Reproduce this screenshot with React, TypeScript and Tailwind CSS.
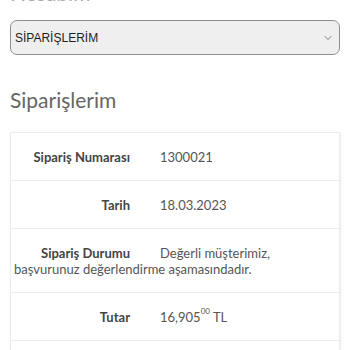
import { ChevronDown } from 'lucide-react';

const rows = [
  { label: 'Sipariş Numarası', value: <>1300021</> },
  { label: 'Tarih', value: <>18.03.2023</> },
  {
    label: 'Sipariş Durumu',
    value: <>Değerli müşterimiz, başvurunuz değerlendirme aşamasındadır.</>,
  },
  {
    label: 'Tutar',
    value: (
      <>
        16,905<sup className="text-[8px] align-[4px]">00</sup> TL
      </>
    ),
  },
  { label: '', value: <></> },
];

export default function App() {
  return (
    <div className="h-[350px] overflow-hidden bg-white px-[10px] font-['Lato',sans-serif]">
      {/* kesilmiş üst başlık */}
      <div className="h-[20px] overflow-hidden">
        <div className="-mt-[19px] text-[21px] leading-[24px] text-[#aaa]">Hesabım</div>
      </div>

      <div className="flex h-[35px] items-center justify-between rounded-[7px] border border-[#8f8f8f] bg-[#efefef] pl-[4px] pr-[5px]">
        <span className="font-['Liberation_Sans',sans-serif] text-[12px] text-[#1e1e1e]">SİPARİŞLERİM</span>
        <ChevronDown className="h-[12px] w-[12px] text-[#555]" strokeWidth={1.5} />
      </div>

      <h2 className="mt-[30px] text-[21px] leading-[30px] text-[#666]">Siparişlerim</h2>

      <div className="mt-[17px] border border-[#ececec] shadow-[1px_1px_3px_rgba(0,0,0,0.08)]">
        {rows.map((r, i) => (
          <div
            key={i}
            className="border-b border-[#ececec] pt-[16px] pb-[15px] pl-[3px] pr-2 text-[13px] leading-[16px] text-[#555]"
          >
            <span className="mr-[30px] inline-block w-[116px] text-right text-[13px] font-bold leading-[16px] text-[#444]">
              {r.label}
            </span>
            {r.value}
          </div>
        ))}
      </div>
    </div>
  );
}
